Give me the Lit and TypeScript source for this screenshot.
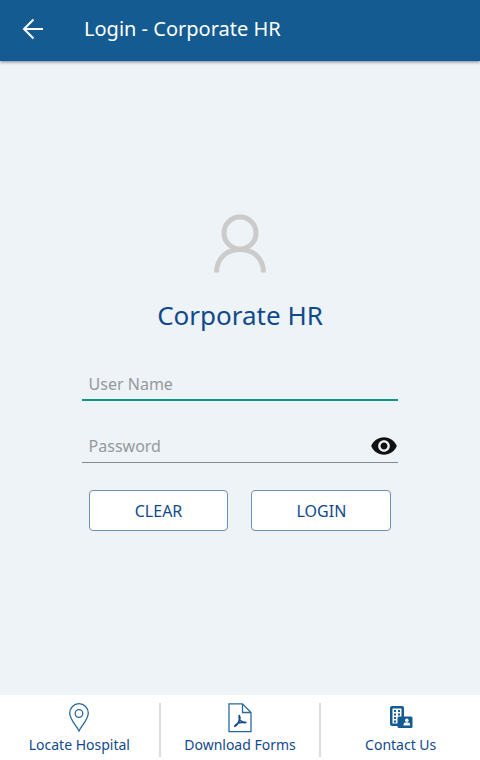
import { LitElement, html, css } from "lit";
import { customElement, state } from "lit/decorators.js";

@customElement("app-root")
export class AppRoot extends LitElement {
  @state() private reveal = false;

  static styles = css`
    :host {
      display: flex;
      flex-direction: column;
      min-height: 100vh;
      background: #eef3f8;
      color: #114a8b;
      font-family: "Noto Sans", "Open Sans", sans-serif;
    }
    * {
      box-sizing: border-box;
    }
    svg {
      display: block;
      flex: none;
    }
    button,
    input {
      margin: 0;
      font: inherit;
    }
    .bar {
      display: flex;
      align-items: center;
      gap: 40px;
      height: 61px;
      padding: 0 22px 3px;
      background: #135b90;
      color: #fff;
      box-shadow: 0 1px 3px rgba(30, 30, 60, 0.55);
    }
    .back,
    .eye {
      padding: 0;
      border: 0;
      background: none;
      color: inherit;
      cursor: pointer;
    }
    .title {
      margin: 0;
      font-size: 20px;
      line-height: 28px;
      font-weight: 400;
    }
    .content {
      flex: 1;
      display: flex;
      flex-direction: column;
      align-items: center;
      justify-content: center;
      padding-bottom: 11px;
    }
    .heading {
      margin: 23px 0 36px;
      font-size: 26px;
      line-height: 36px;
      font-weight: 400;
    }
    .form {
      width: 66%;
    }
    .field {
      display: flex;
      align-items: center;
      height: 32px;
      padding: 0 0 2px 7px;
      border-bottom: 1px solid #85898f;
      margin-bottom: 27px;
    }
    .field.active {
      padding-bottom: 0;
      border-bottom: 2px solid #0a9883;
      margin-bottom: 30px;
    }
    .input {
      flex: 1;
      min-width: 0;
      padding: 0;
      border: 0;
      outline: 0;
      background: none;
      color: #333;
      font-size: 16px;
      line-height: 24px;
    }
    .input::placeholder {
      color: #95999d;
      opacity: 1;
    }
    .eye {
      color: #111;
    }
    .actions {
      display: grid;
      grid-template-columns: 1fr 1fr;
      gap: 23px;
      padding: 0 7px;
    }
    .action {
      height: 41px;
      padding: 0;
      border: 1px solid #6d8fb6;
      border-radius: 4px;
      background: #fff;
      color: #114a8b;
      font-size: 16px;
      cursor: pointer;
    }
    .nav {
      display: flex;
      height: 65px;
      padding: 8px 0 3px;
      background: #fff;
    }
    .link {
      flex: 1;
      display: flex;
      flex-direction: column;
      align-items: center;
      gap: 2px;
      color: inherit;
      text-decoration: none;
      font-size: 14px;
      line-height: 20px;
    }
    .link + .link {
      border-left: 2px solid #dcdcdc;
    }
  `;

  render() {
    return html`
      <header class="bar">
        <button class="back" type="button" aria-label="Back">
          <svg width="22" height="22" viewBox="0 0 22 22" fill="none" stroke="currentColor" stroke-width="2">
            <path d="M21 11H2.500M11.500 1.500L2 11l9.500 9.500" />
          </svg>
        </button>
        <h1 class="title">Login - Corporate HR</h1>
      </header>
      <main class="content">
        <svg width="54" height="60" viewBox="0 0 54 60" fill="none" stroke="#cbcbcb" stroke-width="5">
          <circle cx="27" cy="19" r="16" />
          <path d="M3.500 58.500C3.500 45 13 35.500 27 35.500S50.500 45 50.500 58.500" />
        </svg>
        <h2 class="heading">Corporate HR</h2>
        <form class="form" @submit=${(e: Event) => e.preventDefault()}>
          <div class="field active">
            <input class="input" type="text" name="user" aria-label="User Name" placeholder="User Name" />
          </div>
          <div class="field">
            <input
              class="input"
              type=${this.reveal ? "text" : "password"}
              name="password"
              aria-label="Password"
              placeholder="Password"
            />
            <button
              class="eye"
              type="button"
              aria-label="Show password"
              @click=${() => (this.reveal = !this.reveal)}
            >
              <svg width="28" height="28" viewBox="0 0 24 24" fill="currentColor">
                <path
                  d="M12 4.500C7 4.500 2.730 7.610 1 12c1.730 4.390 6 7.500 11 7.500s9.270-3.110 11-7.500c-1.730-4.390-6-7.500-11-7.500zM12 17c-2.760 0-5-2.240-5-5s2.240-5 5-5 5 2.240 5 5-2.240 5-5 5zm0-8c-1.660 0-3 1.340-3 3s1.340 3 3 3 3-1.340 3-3-1.340-3-3-3z"
                />
              </svg>
            </button>
          </div>
          <div class="actions">
            <button class="action" type="reset">CLEAR</button>
            <button class="action" type="submit">LOGIN</button>
          </div>
        </form>
      </main>
      <nav class="nav">
        <a class="link" href="#locate">
          <svg width="22" height="30" viewBox="0 0 22 30" fill="none" stroke="#2a689c" stroke-width="1.300">
            <path d="M11 28C8 22 1.700 16.500 1.700 10a9.300 9.300 0 0 1 18.600 0C20.300 16.500 14 22 11 28z" />
            <circle cx="11" cy="10.500" r="3.800" />
          </svg>
          Locate Hospital
        </a>
        <a class="link" href="#forms">
          <svg width="24" height="30" viewBox="0 0 24 30" fill="none" stroke="#2a689c" stroke-width="1.300">
            <path d="M1 .8h13.500L23 9.500v19.200H1zM14.500 .8v8.700H23" />
            <path
              d="M11.300 12.500c1 2 .6 4.500-.6 6.500-1 1.800-2.300 3.600-4 4.300M11.300 12.500c-.6 3 1.200 5.500 3.500 6.600 1 .5 2 .6 3 .4M7 22.800c1.500-2.500 5-3.800 10.500-3.500"
              stroke="#114a8b"
              stroke-width="1.600"
              stroke-linecap="round"
            />
          </svg>
          Download Forms
        </a>
        <a class="link" href="#contact">
          <svg width="24" height="30" viewBox="0 0 24 30">
            <rect x="1" y="3" width="14" height="20" rx="2" fill="#135b90" />
            <path d="M3.500 5.500h9v15h-9z" fill="#fff" />
            <path
              d="M5 7h2v2H5zM9 7h2v2H9zM5 10.500h2v2H5zM9 10.500h2v2H9zM5 14h2v2H5zM5 17.500h2v2H5z"
              fill="#135b90"
            />
            <rect x="8.500" y="13.500" width="15" height="11.500" rx="1.500" fill="#135b90" />
            <circle cx="17.800" cy="17.200" r="1.800" fill="#fff" />
            <path d="M14.500 22.500v-.8c0-1.600 1.400-2.400 3.300-2.400s3.300 .8 3.300 2.400v.8z" fill="#fff" />
          </svg>
          Contact Us
        </a>
      </nav>
    `;
  }
}
